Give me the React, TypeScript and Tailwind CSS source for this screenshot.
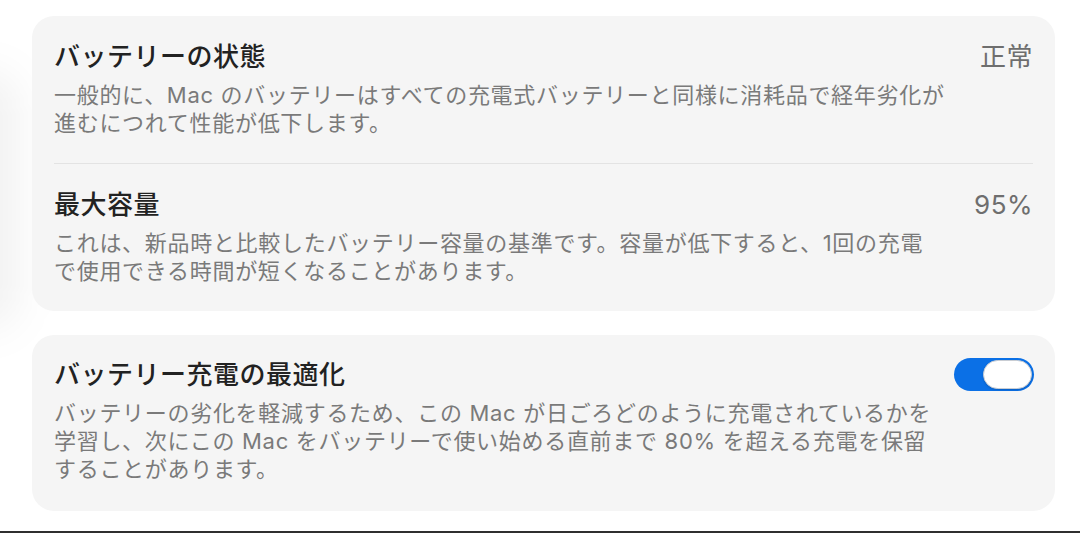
const FONT = { fontFamily: 'Inter, "Noto Sans CJK JP", sans-serif' };

function Row({
  title,
  lines,
  value,
  right,
  className,
}: {
  title: string;
  lines: string[];
  value?: string;
  right?: React.ReactNode;
  className: string;
}) {
  return (
    <div className={`flex items-start justify-between ${className}`}>
      <div className="flex flex-col gap-[8px] min-w-0">
        <div className="text-[26px] leading-[32px] font-medium tracking-[0.5px] text-[#222222]">
          {title}
        </div>
        <div className="text-[22px] leading-[28px] tracking-[0.7px] text-[#7a7a7a] whitespace-nowrap">
          {lines.map((l, i) => (
            <div key={i}>{l}</div>
          ))}
        </div>
      </div>
      {value && (
        <div className="text-[26px] leading-[32px] tracking-[0.5px] text-[#6e6e6e] shrink-0">
          {value}
        </div>
      )}
      {right}
    </div>
  );
}

function Toggle() {
  return (
    <div className="mt-[-1px] mr-[-1px] flex items-center justify-end w-[80px] h-[33px] rounded-full bg-[#0b70e6] px-[2px] shrink-0">
      <div className="w-[49px] h-[29px] rounded-full bg-white border border-[#c9cdd3] shadow-[0_1px_2px_rgba(0,0,0,0.15)]" />
    </div>
  );
}

export default function App() {
  return (
    <div
      className="relative w-[1080px] h-[533px] bg-white overflow-hidden flex flex-col"
      style={FONT}
    >
      {/* shadow of the window behind */}
      <div className="absolute left-[-50px] top-[70px] w-[70px] h-[260px] rounded-full bg-black/[0.05] blur-[20px]" />

      <div className="relative flex flex-col gap-[24px] pt-[16px] pl-[32px] pr-[25px]">
        <div className="rounded-[22px] bg-[#f5f5f5] px-[22px]">
          <Row
            className="pt-[25px] pb-[26px]"
            title="バッテリーの状態"
            value="正常"
            lines={[
              "一般的に、Mac のバッテリーはすべての充電式バッテリーと同様に消耗品で経年劣化が",
              "進むにつれて性能が低下します。",
            ]}
          />
          <div className="h-px bg-[#e3e3e3]" />
          <Row
            className="pt-[25px] pb-[26px]"
            title="最大容量"
            value="95%"
            lines={[
              "これは、新品時と比較したバッテリー容量の基準です。容量が低下すると、1回の充電",
              "で使用できる時間が短くなることがあります。",
            ]}
          />
        </div>

        <div className="rounded-[22px] bg-[#f5f5f5] px-[22px]">
          <Row
            className="pt-[24px] pb-[28px]"
            title="バッテリー充電の最適化"
            right={<Toggle />}
            lines={[
              "バッテリーの劣化を軽減するため、この Mac が日ごろどのように充電されているかを",
              "学習し、次にこの Mac をバッテリーで使い始める直前まで 80% を超える充電を保留",
              "することがあります。",
            ]}
          />
        </div>
      </div>

      <div className="mt-auto h-[2px] bg-[#2f2f2f]" />
    </div>
  );
}
